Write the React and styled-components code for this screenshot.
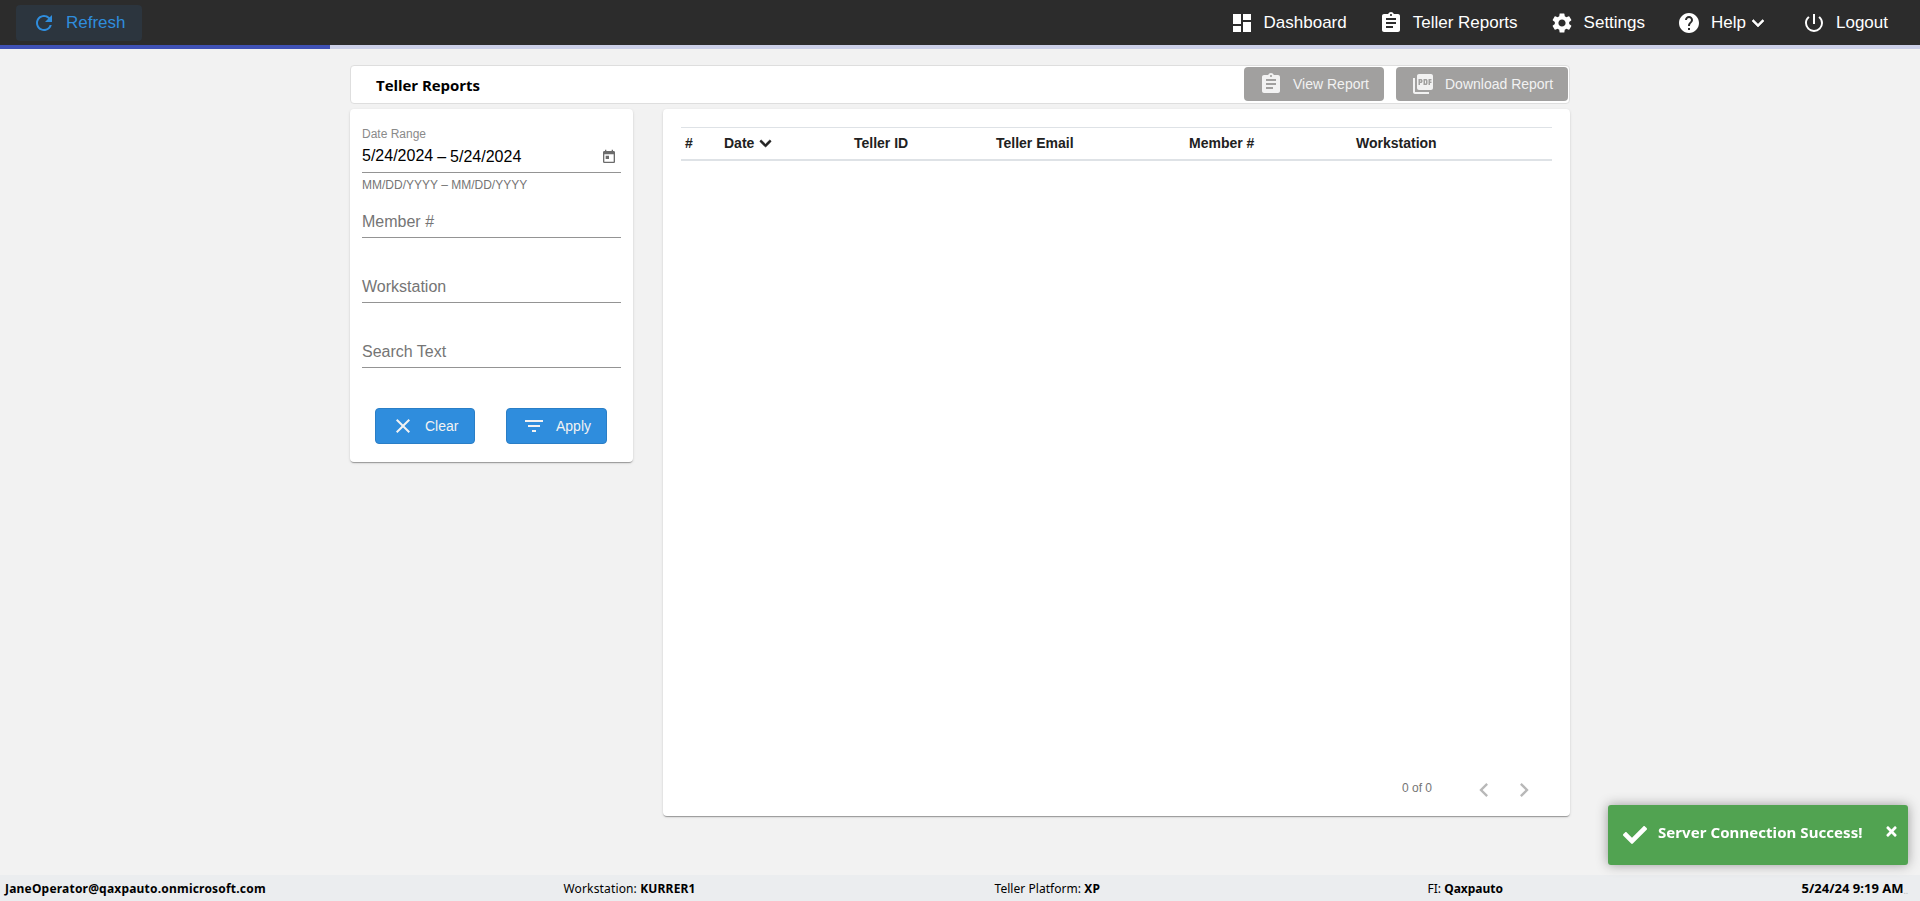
import React from 'react';
import styled, { createGlobalStyle } from 'styled-components';
import {
  MdRefresh,
  MdDashboard,
  MdAssignment,
  MdSettings,
  MdHelp,
  MdExpandMore,
  MdPowerSettingsNew,
  MdPictureAsPdf,
  MdToday,
  MdClose,
  MdFilterList,
  MdChevronLeft,
  MdChevronRight,
} from 'react-icons/md';
import { FaCheck, FaChevronDown, FaTimes } from 'react-icons/fa';

const GlobalStyle = createGlobalStyle`
* { box-sizing: border-box; }
body {
  margin: 0;
  background: #f2f2f2;
  color: #000;
  font-family: 'Liberation Sans', Arial, sans-serif;
  overflow: hidden;
}
button { font-family: inherit; cursor: pointer; }
svg { flex: none; display: block; }
`;

const Page = styled.div`
  height: 100vh;
  display: flex;
  flex-direction: column;
`;

const NavBar = styled.header`
  height: 45px;
  padding: 0 16px;
  display: flex;
  align-items: center;
  justify-content: space-between;
  background: #2c2c2c;
`;

const NavLinks = styled.nav`
  display: flex;
`;

const NavButton = styled.button`
  height: 36px;
  padding: 0 16px;
  display: flex;
  align-items: center;
  border: none;
  border-radius: 4px;
  font-size: 17px;
  line-height: 36px;
  white-space: nowrap;
  color: ${({ $active }) => ($active ? '#2f8ddd' : '#fff')};
  background: ${({ $active }) => ($active ? '#2c353e' : 'transparent')};

  svg {
    margin-top: 1px;
  }
`;

const MenuArrow = styled(MdExpandMore)`
  path:last-child {
    stroke: currentColor;
    stroke-width: 0.6;
  }
`;

const Label = styled.span`
  margin-left: 10px;
`;

const ProgressTrack = styled.div`
  height: 4px;
  flex: none;
  background: #cbcfe8;
`;

const ProgressFill = styled.div`
  width: 330px;
  height: 4px;
  background: #3f51b5;
`;

const Content = styled.main`
  width: 1220px;
  flex: 1;
  margin-left: 350px;
  padding-top: 16px;
`;

const TitleBar = styled.div`
  height: 39px;
  display: flex;
  align-items: center;
  padding: 0 1px 0 25px;
  background: #fff;
  border: 1px solid #dedede;
  border-radius: 4px;
`;

const Title = styled.h1`
  margin: 0 auto 0 0;
  font-family: 'Open Sans', 'Noto Sans', sans-serif;
  font-size: 15px;
  font-weight: 700;
  letter-spacing: -0.05px;
`;

const ReportButton = styled.button`
  width: ${({ $width }) => $width}px;
  height: 34px;
  margin: 0 0 1px ${({ $gap }) => $gap || 0}px;
  padding: 0 15px;
  display: flex;
  align-items: center;
  border: none;
  border-radius: 4px;
  background: #a1a09f;
  color: #f2f2f2;
  font-size: 14px;
  white-space: nowrap;
`;

const Columns = styled.div`
  display: flex;
  align-items: flex-start;
  gap: 30px;
  margin-top: 5px;
`;

const Card = styled.section`
  background: #fff;
  border-radius: 4px;
  box-shadow: 0 2px 1px -1px rgba(0, 0, 0, 0.2), 0 1px 1px 0 rgba(0, 0, 0, 0.14),
    0 1px 3px 0 rgba(0, 0, 0, 0.12);
`;

const FilterCard = styled(Card)`
  width: 283px;
  height: 353px;
  padding: 18px 12px 0;
`;

const FieldLabel = styled.div`
  height: 15px;
  font-size: 12px;
  line-height: 14px;
  color: #8a8a8a;
`;

const DateRow = styled.div`
  height: 31px;
  display: flex;
  align-items: flex-start;
  padding: 5px 4px 0 0;
  border-bottom: 1px solid #949494;
  font-size: 16px;
  line-height: 18px;

  svg {
    margin: 2px 0 0 auto;
    color: #6b6b6b;
  }
`;

const DateDash = styled.span`
  margin: 1px 4px 0;
`;

const DateEnd = styled.span`
  margin-top: 1px;
`;

const Hint = styled.div`
  height: 35px;
  padding-top: 5px;
  font-size: 12px;
  line-height: 14px;
  color: #757575;
`;

const Field = styled.div`
  height: 30px;
  margin-bottom: 35px;
  padding-top: 5px;
  border-bottom: 1px solid #949494;
  font-size: 16px;
  line-height: 18px;
  color: #757575;
`;

const Fields = styled.div`
  ${Field}:last-child {
    margin-bottom: 0;
  }
`;

const FilterActions = styled.div`
  display: flex;
  gap: 31px;
  margin: 40px 0 0 13px;
`;

const ActionButton = styled.button`
  width: ${({ $width }) => $width}px;
  height: 36px;
  padding: 0 0 0 15px;
  display: flex;
  align-items: center;
  border: 1px solid #2a7ec6;
  border-radius: 4px;
  background: #2f8ddd;
  color: #f2f2f2;
  font-size: 14px;
`;

const TableCard = styled(Card)`
  width: 907px;
  height: 707px;
  padding: 18px 18px 12px;
  display: flex;
  flex-direction: column;
`;

const HeaderRow = styled.div`
  height: 34px;
  padding-left: 4px;
  display: grid;
  grid-template-columns: 39px 130px 142px 193px 167px 1fr;
  align-items: center;
  border-top: 1px solid #dee2e6;
  border-bottom: 2px solid #dee2e6;
  font-size: 14px;
  font-weight: 700;
  color: #212121;
`;

const HeaderCell = styled.div`
  display: flex;
  align-items: center;
  gap: 5px;
  padding-bottom: 1px;
  white-space: nowrap;

  svg {
    margin-top: 1px;
    stroke: currentColor;
    stroke-width: 30;
  }
`;

const Pager = styled.div`
  margin-top: auto;
  padding-right: 8px;
  display: flex;
  justify-content: flex-end;
  align-items: center;
  font-size: 12px;
  color: #757575;
`;

const PagerCount = styled.span`
  margin: 0 32px 5px 0;
`;

const PagerButton = styled.button`
  width: 40px;
  height: 28px;
  padding: 0;
  display: flex;
  justify-content: center;
  border: none;
  background: none;
  color: #b8b8b8;
`;

const Footer = styled.footer`
  height: 26px;
  padding-left: 5px;
  display: grid;
  grid-template-columns: 558.5px 431px 433px 374px 1fr;
  align-items: center;
  background: #ebedef;
  font-family: 'Noto Sans', sans-serif;
  font-size: 12px;
  white-space: nowrap;
`;

const FooterItem = styled.span`
  letter-spacing: ${({ $spacing }) => $spacing || 0}px;
`;

const Clock = styled.span`
  display: flex;
  font-size: 13px;
`;

const ClockTail = styled.span`
  color: #b5b7b9;
  font-size: 9px;
  align-self: flex-end;
`;

// Toast sits above the page in the lower right corner
const Toast = styled.div`
  position: fixed;
  right: 12px;
  bottom: 36px;
  width: 300px;
  height: 60px;
  padding: 15px 9px 0 15px;
  display: flex;
  align-items: flex-start;
  border-radius: 3px;
  background: #51a351;
  color: #fff;
  box-shadow: 0 0 12px #999;
  font-family: 'Noto Sans', sans-serif;
  font-size: 15px;
  font-weight: 700;
  line-height: 24px;
  letter-spacing: 0.06px;
  white-space: nowrap;

  svg:first-child {
    margin: 3px 11px 0 0;
  }
  svg:last-child {
    margin: 4px 0 0 auto;
  }
`;

const columns = ['#', 'Date', 'Teller ID', 'Teller Email', 'Member #', 'Workstation'];
const fields = ['Member #', 'Workstation', 'Search Text'];

const App = () => {
  return (
    <Page>
      <GlobalStyle />
      <NavBar>
        <NavButton $active>
          <MdRefresh size={24} />
          <Label>Refresh</Label>
        </NavButton>
        <NavLinks>
          <NavButton>
            <MdDashboard size={24} />
            <Label>Dashboard</Label>
          </NavButton>
          <NavButton>
            <MdAssignment size={24} />
            <Label>Teller Reports</Label>
          </NavButton>
          <NavButton>
            <MdSettings size={24} />
            <Label>Settings</Label>
          </NavButton>
          <NavButton>
            <MdHelp size={24} />
            <Label>Help</Label>
            <MenuArrow size={24} />
          </NavButton>
          <NavButton>
            <MdPowerSettingsNew size={24} />
            <Label>Logout</Label>
          </NavButton>
        </NavLinks>
      </NavBar>
      <ProgressTrack>
        <ProgressFill />
      </ProgressTrack>
      <Content>
        <TitleBar>
          <Title>Teller Reports</Title>
          <ReportButton $width={140}>
            <MdAssignment size={24} />
            <Label>View Report</Label>
          </ReportButton>
          <ReportButton $width={172} $gap={12}>
            <MdPictureAsPdf size={24} />
            <Label>Download Report</Label>
          </ReportButton>
        </TitleBar>
        <Columns>
          <FilterCard>
            <FieldLabel>Date Range</FieldLabel>
            <DateRow>
              <span>5/24/2024</span>
              <DateDash>–</DateDash>
              <DateEnd>5/24/2024</DateEnd>
              <MdToday size={16} />
            </DateRow>
            <Hint>MM/DD/YYYY – MM/DD/YYYY</Hint>
            <Fields>
              {fields.map((name) => (
                <Field key={name}>{name}</Field>
              ))}
            </Fields>
            <FilterActions>
              <ActionButton $width={100}>
                <MdClose size={24} />
                <Label>Clear</Label>
              </ActionButton>
              <ActionButton $width={101}>
                <MdFilterList size={24} />
                <Label>Apply</Label>
              </ActionButton>
            </FilterActions>
          </FilterCard>
          <TableCard>
            <HeaderRow>
              {columns.map((name) => (
                <HeaderCell key={name}>
                  {name}
                  {name === 'Date' && <FaChevronDown size={13} />}
                </HeaderCell>
              ))}
            </HeaderRow>
            <Pager>
              <PagerCount>0 of 0</PagerCount>
              <PagerButton>
                <MdChevronLeft size={28} />
              </PagerButton>
              <PagerButton>
                <MdChevronRight size={28} />
              </PagerButton>
            </Pager>
          </TableCard>
        </Columns>
      </Content>
      <Footer>
        <FooterItem $spacing={0.2}>
          <b>JaneOperator@qaxpauto.onmicrosoft.com</b>
        </FooterItem>
        <FooterItem $spacing={0.15}>
          Workstation: <b>KURRER1</b>
        </FooterItem>
        <FooterItem $spacing={0.05}>
          Teller Platform: <b>XP</b>
        </FooterItem>
        <FooterItem>
          FI: <b>Qaxpauto</b>
        </FooterItem>
        <Clock>
          <b>5/24/24 9:19 AM</b>
          <ClockTail>..</ClockTail>
        </Clock>
      </Footer>
      <Toast>
        <FaCheck size={24} />
        Server Connection Success!
        <FaTimes size={15} />
      </Toast>
    </Page>
  );
};

export default App;
